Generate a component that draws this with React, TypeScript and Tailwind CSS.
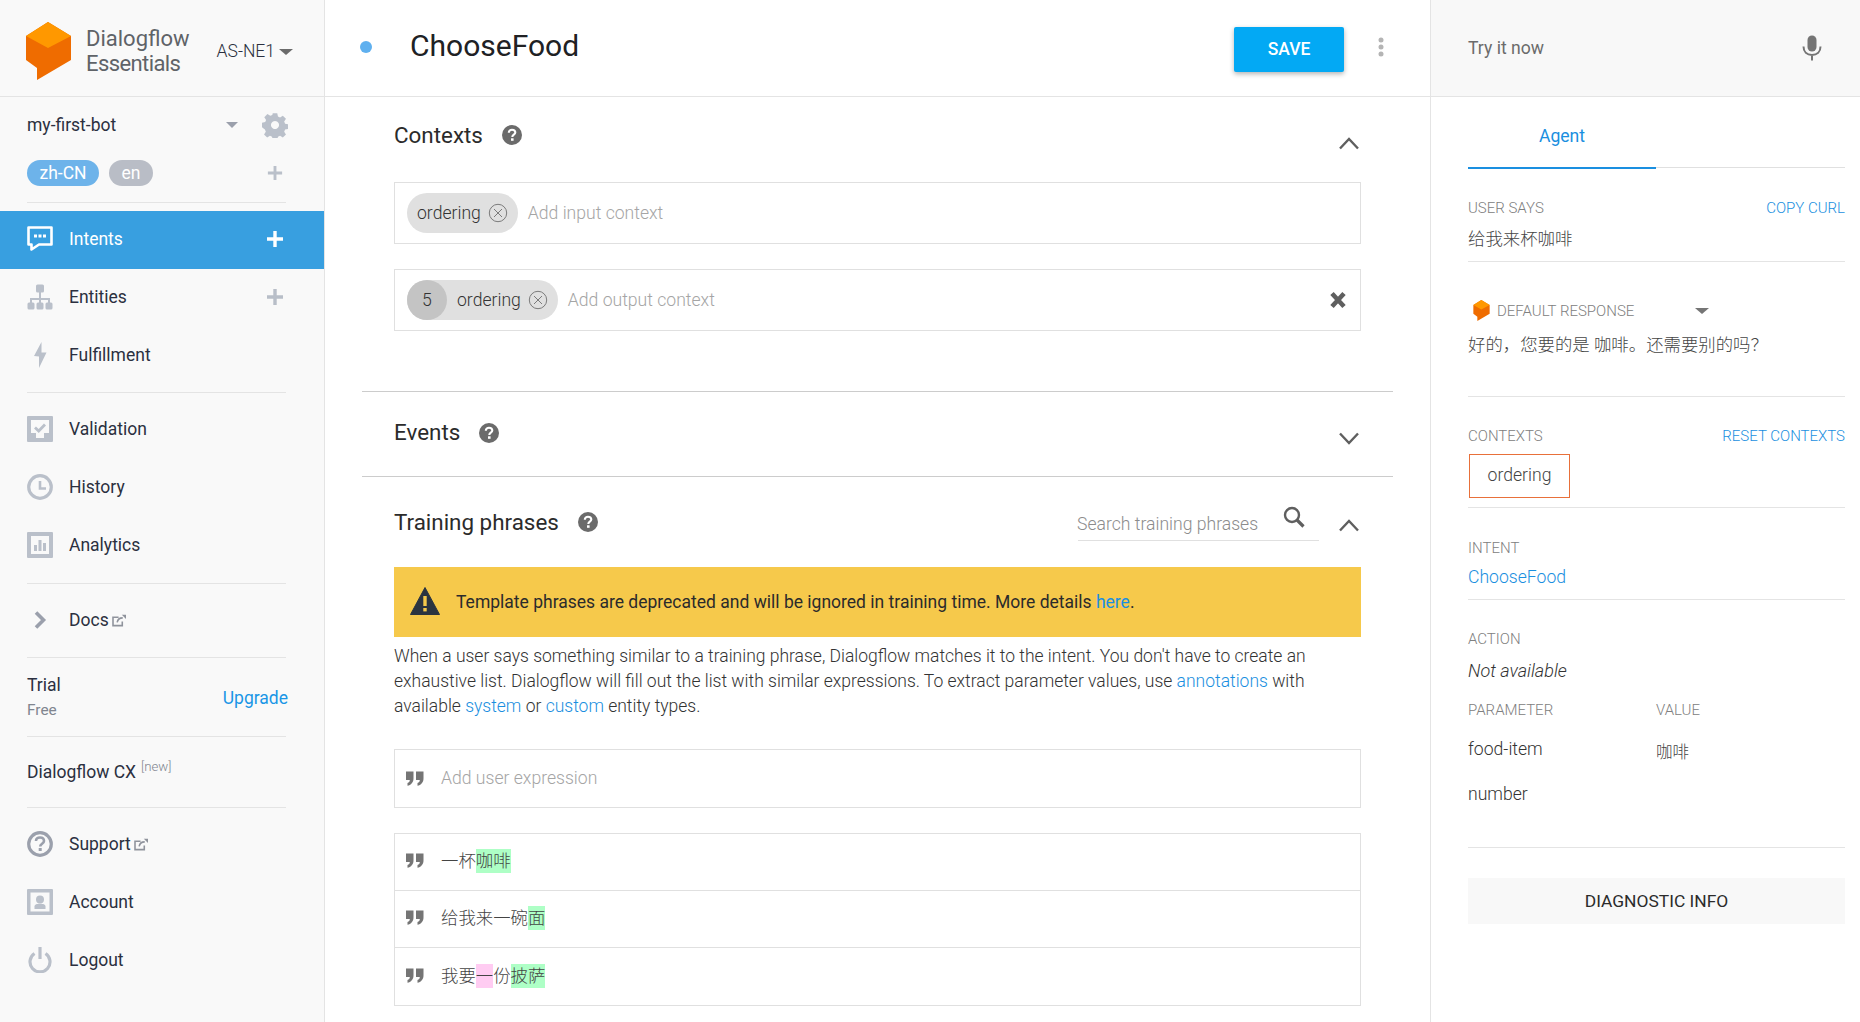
import React from "react";

const Logo = ({ className }: { className?: string }) => (
  <svg viewBox="0 0 45 58" className={className}>
    <path d="M22 0 L45 14 L45 38 L11 58 L11 46 L0 38 L0 14 Z" fill="#ef6c00" />
    <path d="M22 0 L45 14 L22 26 L0 14 Z" fill="#ff9800" />
  </svg>
);

const Divider = ({ className = "" }: { className?: string }) => <div className={`h-px bg-[#e4e4e4] ${className}`} />;

const Plus = ({ white }: { white?: boolean }) => (
  <svg viewBox="0 0 18 18" className="w-[18px] h-[18px]">
    <path d="M9 1v16M1 9h16" stroke={white ? "#fff" : "#b8bec8"} strokeWidth="3.4" fill="none" />
  </svg>
);

const ExtLink = () => (
  <svg viewBox="0 0 16 14" className="w-[15px] h-[13px] ml-[3px] inline-block">
    <path d="M11 8v4.500H1V3.500H7" stroke="#8f939c" strokeWidth="1.700" fill="none" />
    <path d="M5.500 9 C6 5.500 9 4.200 11.500 4.200" stroke="#8f939c" strokeWidth="1.700" fill="none" />
    <path d="M10.500 0.800 L15 0.800 L15 5.300 Z" fill="#8f939c" />
  </svg>
);

const ic = "w-[26px] h-[26px] shrink-0";
const G = "#bac0ca";

const IconIntents = () => (
  <svg viewBox="0 0 26 26" className={ic}>
    <path d="M1.500 1.500H24.500V18.500H12L4.500 23.500V18.500H1.500Z" fill="none" stroke="#fff" strokeWidth="2.600" strokeLinejoin="round" />
    <rect x="7" y="8.500" width="3" height="3" fill="#fff" />
    <rect x="11.500" y="8.500" width="3" height="3" fill="#fff" />
    <rect x="16" y="8.500" width="3" height="3" fill="#fff" />
  </svg>
);
const IconEntities = () => (
  <svg viewBox="0 0 26 26" className={ic}>
    <path d="M13 8V14M4 20V15H22V20M13 15V20" stroke={G} strokeWidth="2" fill="none" />
    <rect x="9" y="0.500" width="8" height="8" rx="1.500" fill={G} />
    <rect x="0.500" y="18.500" width="7" height="7" rx="1.500" fill={G} />
    <rect x="9.500" y="18.500" width="7" height="7" rx="1.500" fill={G} />
    <rect x="18.500" y="18.500" width="7" height="7" rx="1.500" fill={G} />
  </svg>
);
const IconBolt = () => (
  <svg viewBox="0 0 26 26" className={ic}>
    <path d="M14.500 0 L7 14 L12 14.500 L12 26 L19.500 10.500 L14.500 10.500Z" fill={G} />
  </svg>
);
const IconValidation = () => (
  <svg viewBox="0 0 26 26" className={ic}>
    <path fillRule="evenodd" d="M1 0H25a1 1 0 0 1 1 1V25a1 1 0 0 1-1 1H1a1 1 0 0 1-1-1V1a1 1 0 0 1 1-1ZM4 4V17H9V22H17V17H22V4Z" fill={G} />
    <path d="M8 11.500L11.700 15L18 8.500" stroke={G} strokeWidth="2.800" fill="none" />
  </svg>
);
const IconClock = () => (
  <svg viewBox="0 0 26 26" className={ic}>
    <circle cx="13" cy="13" r="11.300" fill="none" stroke={G} strokeWidth="3.200" />
    <path d="M13 7V14.500H19" stroke={G} strokeWidth="2.600" fill="none" />
  </svg>
);
const IconAnalytics = () => (
  <svg viewBox="0 0 26 26" className={ic}>
    <path fillRule="evenodd" d="M1 0H25a1 1 0 0 1 1 1V25a1 1 0 0 1-1 1H1a1 1 0 0 1-1-1V1a1 1 0 0 1 1-1ZM4 4V22H22V4Z" fill={G} />
    <rect x="7" y="13" width="3" height="6" fill={G} />
    <rect x="11.500" y="8" width="3" height="11" fill={G} />
    <rect x="16" y="11" width="3" height="8" fill={G} />
  </svg>
);
const IconChevron = () => (
  <svg viewBox="0 0 26 26" className={ic}>
    <path d="M9 5.500L16.500 13L9 20.500" stroke="#9ba0ac" strokeWidth="3.600" fill="none" />
  </svg>
);
const IconHelp = () => (
  <svg viewBox="0 0 26 26" className={ic}>
    <circle cx="13" cy="13" r="11.300" fill="none" stroke="#9ba0ac" strokeWidth="3.200" />
    <path d="M9 10C9 7.500 10.800 6.500 13 6.500C15.500 6.500 17 8 17 10C17 12.800 13.200 12.800 13.200 15.500" stroke="#9ba0ac" strokeWidth="2.600" fill="none" />
    <rect x="11.700" y="17" width="3" height="3" fill="#9ba0ac" />
  </svg>
);
const IconAccount = () => (
  <svg viewBox="0 0 26 26" className={ic}>
    <path fillRule="evenodd" d="M1 0H25a1 1 0 0 1 1 1V25a1 1 0 0 1-1 1H1a1 1 0 0 1-1-1V1a1 1 0 0 1 1-1ZM3.500 3.500V22.500H22.500V3.500Z" fill={G} />
    <circle cx="13" cy="10.500" r="4" fill={G} />
    <path d="M7.500 20V17.500C7.500 15.500 10 14.800 13 14.800C16 14.800 18.500 15.500 18.500 17.500V20Z" fill={G} />
  </svg>
);
const IconPower = () => (
  <svg viewBox="0 0 26 26" className={ic}>
    <path d="M7.500 6.500A10 10 0 1 0 18.500 6.500" stroke={G} strokeWidth="3.200" fill="none" />
    <path d="M13 0V12" stroke={G} strokeWidth="3.200" />
  </svg>
);

const NavRow = ({ icon, label, ext, plus, active, up }: { icon: React.ReactNode; label: string; ext?: boolean; plus?: boolean; active?: boolean; up?: boolean }) => (
  <div className={`h-[58px] flex items-center pl-[27px] pr-[40px] ${up ? "pb-[2px]" : ""} ${active ? "bg-[#389fe0] text-white" : "text-[#2b3040]"}`}>
    {icon}
    <span className="ml-[16px] text-[17.500px] flex items-center">{label}{ext && <ExtLink />}</span>
    {plus && <span className="ml-auto"><Plus white={active} /></span>}
  </div>
);

const SideDivider = ({ className = "" }: { className?: string }) => <Divider className={`ml-[27px] w-[259px] ${className}`} />;

const Sidebar = () => (
  <aside className="w-[325px] shrink-0 h-full bg-[#f9f9f9] border-r border-[#e4e4e4] overflow-hidden">
    <div className="h-[97px] border-b border-[#e4e4e4] flex items-center pl-[26px]">
      <Logo className="w-[45px] h-[58px] mt-[6px]" />
      <div className="ml-[15px] text-[22px] leading-[25px] text-[#5f6368] mt-[5px]">Dialogflow<br /><span className="tracking-[-0.6px]">Essentials</span></div>
      <div className="ml-[27px] text-[17.500px] font-light text-[#2b3040] flex items-center mt-[7px]">AS-NE1
        <span className="ml-[4px] w-0 h-0 border-x-[7px] border-x-transparent border-t-[6px] border-t-[#6b6b6b]" />
      </div>
    </div>
    <div className="mt-[12px] h-[32px] flex items-center pl-[27px] text-[17.500px] text-[#2b3040]">
      my-first-bot
      <span className="ml-[110px] w-0 h-0 border-x-[6px] border-x-transparent border-t-[6px] border-t-[#9ba0ac]" />
      <svg viewBox="0 0 26 26" className="w-[26px] h-[26px] ml-[24px]">
        <path fillRule="evenodd" fill={G} d="M10.500 0h5l.8 3.600 2.300 1 3.100-2 3.500 3.500-2 3.100 1 2.300 3.600.8v5l-3.600.8-1 2.300 2 3.100-3.500 3.500-3.100-2-2.300 1-.8 3.600h-5l-.8-3.600-2.300-1-3.100 2-3.500-3.500 2-3.100-1-2.300L-1.500 15.500v-5l3.600-.8 1-2.300-2-3.100 3.500-3.500 3.100 2 2.300-1ZM13 8.500a4.500 4.500 0 1 0 .001 0Z" transform="translate(1.300 1.300) scale(.9)" />
      </svg>
    </div>
    <div className="mt-[19px] h-[26px] flex items-center pl-[27px] pr-[41px] text-[17.500px] text-white">
      <span className="h-[26px] w-[72px] rounded-full bg-[#6db3ea] flex items-center justify-center">zh-CN</span>
      <span className="ml-[10px] h-[26px] w-[44px] rounded-full bg-[#b9bdc6] flex items-center justify-center">en</span>
      <span className="ml-auto"><svg viewBox="0 0 18 18" className="w-[16px] h-[16px]"><path d="M9 1v16M1 9h16" stroke={G} strokeWidth="3.200" /></svg></span>
    </div>
    <SideDivider className="mt-[16px]" />
    <div className="mt-[8px]">
      <NavRow up active icon={<IconIntents />} label="Intents" plus />
      <NavRow up icon={<IconEntities />} label="Entities" plus />
      <NavRow up icon={<IconBolt />} label="Fulfillment" />
    </div>
    <SideDivider className="mt-[7px]" />
    <div className="mt-[7px]">
      <NavRow icon={<IconValidation />} label="Validation" />
      <NavRow icon={<IconClock />} label="History" />
      <NavRow icon={<IconAnalytics />} label="Analytics" />
    </div>
    <SideDivider className="mt-[9px]" />
    <div className="mt-[7px]"><NavRow icon={<IconChevron />} label="Docs" ext /></div>
    <SideDivider className="mt-[8px]" />
    <div className="mt-[15px] pl-[27px] pr-[36px] flex items-center justify-between">
      <div>
        <div className="text-[17.500px] leading-[24px] text-[#2b3040]">Trial</div>
        <div className="mt-px text-[15.400px] leading-[24px] text-[#80858f]">Free</div>
      </div>
      <div className="text-[17.500px] text-[#1a96e6] mt-[1px]">Upgrade</div>
    </div>
    <SideDivider className="mt-[14px]" />
    <div className="mt-[19px] h-[32px] pl-[27px] flex items-center text-[17.500px] text-[#2b3040]">
      Dialogflow CX<span className="ml-[5px] -mt-[10px] text-[13.200px] font-light text-[#80858f]">[new]</span>
    </div>
    <SideDivider className="mt-[19px]" />
    <div className="mt-[7px]">
      <NavRow icon={<IconHelp />} label="Support" ext />
      <NavRow icon={<IconAccount />} label="Account" />
      <NavRow icon={<IconPower />} label="Logout" />
    </div>
  </aside>
);

const Help = ({ className = "" }: { className?: string }) => (
  <svg viewBox="0 0 20 20" className={`w-[20px] h-[20px] ${className}`}>
    <circle cx="10" cy="10" r="10" fill="#6b6b6b" />
    <path d="M6.800 7.800C6.800 5.800 8.300 4.700 10 4.700C12 4.700 13.300 5.900 13.300 7.500C13.300 9.700 10.300 9.700 10.300 12" stroke="#fff" strokeWidth="2.100" fill="none" />
    <rect x="9" y="13.300" width="2.600" height="2.500" fill="#fff" />
  </svg>
);

const Chev = ({ up, className = "" }: { up?: boolean; className?: string }) => (
  <svg viewBox="0 0 22 14" className={`w-[22px] h-[14px] mr-[1px] ${className}`}>
    <path d={up ? "M2 12.500L11 3L20 12.500" : "M2 1.500L11 11L20 1.500"} stroke="#5f5f5f" strokeWidth="2.400" fill="none" />
  </svg>
);

const CircleX = () => (
  <svg viewBox="0 0 20 20" className="w-[20px] h-[20px] shrink-0">
    <circle cx="10" cy="10" r="8.700" stroke="#7b7b7b" strokeWidth="1" fill="none" />
    <path d="M6 6L14 14M14 6L6 14" stroke="#7b7b7b" strokeWidth="1" />
  </svg>
);

const Quote = () => (
  <svg viewBox="0 0 18 15" className="w-[18px] h-[15px] shrink-0">
    <path d="M0 0.500H7.500V7.500C7.500 11.500 5 14 1.500 14.800V12C3 11.500 3.800 10.500 3.800 9H0ZM10 0.500H17.500V7.500C17.500 11.500 15 14 11.500 14.800V12C13 11.500 13.800 10.500 13.800 9H10Z" fill="#757575" />
  </svg>
);

const ct = "text-[17.600px] font-light";

const Phrase = ({ children, last }: { children: React.ReactNode; last?: boolean }) => (
  <div className={`h-[57px] flex items-center pl-[11px] ${last ? "" : "border-b border-[#e0e0e0]"}`}>
    <span className="-mt-[3px]"><Quote /></span>
    <span className="ml-[17px] text-[17.400px] font-light text-[#444] flex items-center -mt-[1px]">{children}</span>
  </div>
);

const Hl = ({ pink, children }: { pink?: boolean; children: React.ReactNode }) => (
  <span className={`h-[24px] flex items-center ${pink ? "bg-[#ffccf2]" : "bg-[#aeffc6]"}`}>{children}</span>
);

const Title = ({ children }: { children: React.ReactNode }) => (
  <h2 className="text-[22.400px] leading-[32px] font-normal text-[#2b2b2b]">{children}</h2>
);

const Main = () => (
  <main className="flex-1 min-w-0 h-full overflow-hidden bg-white">
    <div className="h-[97px] border-b border-[#e4e4e4] flex items-center pl-[36px]">
      <span className="w-[12px] h-[12px] rounded-full bg-[#5fb0ef] -mt-[3px] -ml-[1px]" />
      <h1 className="ml-[38px] text-[30px] font-normal text-[#202124] -mt-[5px]">ChooseFood</h1>
      <button className="ml-auto h-[45px] w-[110px] rounded-[2px] bg-[#03a9f4] text-white text-[17.500px] font-medium shadow-[0_2px_5px_rgba(0,0,0,0.3)] mt-[2px]">SAVE</button>
      <svg viewBox="0 0 6 20" className="w-[6px] h-[20px] ml-[34px] mr-[46px] -mt-[3px]">
        <circle cx="3" cy="3" r="2.500" fill="#b4b4b4" /><circle cx="3" cy="10" r="2.500" fill="#b4b4b4" /><circle cx="3" cy="17" r="2.500" fill="#b4b4b4" />
      </svg>
    </div>

    <div className="ml-[37px] mr-[37px]">
      <div className="px-[32px]">
        <div className="h-[85px] flex items-start pt-[22px]">
          <Title>Contexts</Title>
          <Help className="ml-[19px] mt-[6px]" />
          <Chev up className="ml-auto mt-[17px]" />
        </div>
        <div className="h-[62px] border border-[#e0e0e0] flex items-center pl-[12px]">
          <span className="h-[40px] pl-[10px] pr-[10px] rounded-full bg-[#e0e0e0] flex items-center text-[17.600px] font-light text-[#333]">ordering<span className="ml-[7px]"><CircleX /></span></span>
          <span className={`ml-[10px] ${ct} text-[#a5a5a5]`}>Add input context</span>
        </div>
        <div className="mt-[25px] h-[62px] border border-[#e0e0e0] flex items-center pl-[12px] pr-[13px]">
          <span className="h-[40px] pr-[10px] rounded-full bg-[#e0e0e0] flex items-center text-[17.600px] font-light text-[#333]">
            <span className="w-[40px] h-[40px] rounded-full bg-[#c4c4c4] flex items-center justify-center">5</span>
            <span className="ml-[10px]">ordering</span><span className="ml-[7px]"><CircleX /></span>
          </span>
          <span className={`ml-[10px] ${ct} text-[#a5a5a5]`}>Add output context</span>
          <svg viewBox="0 0 18 18" className="ml-auto w-[18px] h-[18px]">
            <path d="M3 2.500L15 15.500M15 2.500L3 15.500" stroke="#5f5f5f" strokeWidth="4.600" />
          </svg>
        </div>
      </div>

      <div className="mt-[60px] h-px bg-[#cccccc]" />
      <div className="h-[84px] px-[32px] flex items-start pt-[24px] ">
        <Title>Events</Title>
        <Help className="ml-[19px] mt-[7px]" />
        <Chev className="ml-auto mt-[16px]" />
      </div>
      <div className="h-px bg-[#cccccc]" />

      <div className="px-[32px]">
        <div className="h-[90px] flex items-start pt-[29px]">
          <Title>Training phrases</Title>
          <Help className="ml-[19px] mt-[6px]" />
          <div className="ml-auto w-[241px] h-[35px] border-b border-[#e0e0e0] flex items-start pt-[5px]">
            <span className={`${ct} text-[#8c8c8c] -ml-[1px]`}>Search training phrases</span>
            <svg viewBox="0 0 22 22" className="ml-auto mr-[14px] -mt-[5px] w-[22px] h-[22px]">
              <circle cx="9" cy="9" r="7" stroke="#5f5f5f" strokeWidth="2.400" fill="none" />
              <path d="M14 14L20.500 20.500" stroke="#5f5f5f" strokeWidth="3.200" />
            </svg>
          </div>
          <Chev up className="ml-[19px] mt-[12px]" />
        </div>

        <div className="h-[70px] bg-[#f6c94b] flex items-center pl-[16px] text-[#2b2b2b]">
          <svg viewBox="0 0 30 28" className="w-[30px] h-[28px] shrink-0 -mt-[2px]">
            <path d="M15 0.500L29.500 27.500H0.500Z" fill="#2b3440" stroke="#2b3440" strokeLinejoin="round" />
            <rect x="13.300" y="9" width="3.400" height="10" fill="#f6c94b" />
            <rect x="13.300" y="21" width="3.400" height="3.400" fill="#f6c94b" />
          </svg>
          <span className="ml-[16px] text-[17.500px] font-normal">Template phrases are deprecated and will be ignored in training time. More details <span className="text-[#1a8fe0]">here</span>.</span>
        </div>

        <p className="mt-[7px] text-[17.500px] leading-[25px] font-light text-[#333]">
          When a user says something similar to a training phrase, Dialogflow matches it to the intent. You don't have to create an<br />
          exhaustive list. Dialogflow will fill out the list with similar expressions. To extract parameter values, use <span className="text-[#1a8fe0]">annotations</span> with<br />
          available <span className="text-[#1a8fe0]">system</span> or <span className="text-[#1a8fe0]">custom</span> entity types.
        </p>

        <div className="mt-[30px] h-[59px] border border-[#e0e0e0] flex items-center pl-[11px]">
          <span className="-mt-[1px]"><Quote /></span>
          <span className={`ml-[17px] ${ct} text-[#a5a5a5]`}>Add user expression</span>
        </div>

        <div className="mt-[25px] border border-[#e0e0e0]">
          <Phrase>一杯<Hl>咖啡</Hl></Phrase>
          <Phrase>给我来一碗<Hl>面</Hl></Phrase>
          <Phrase last>我要<Hl pink>一</Hl>份<Hl>披萨</Hl></Phrase>
        </div>
      </div>
    </div>
  </main>
);

const Label = ({ children, className = "", link }: { children: React.ReactNode; className?: string; link?: boolean }) => (
  <div className={`h-[20px] leading-[20px] text-[15px] font-light ${link ? "text-[#1a8fe0]" : "text-[#808080]"} ${className}`}>{children}</div>
);

const Right = () => (
  <aside className="w-[430px] shrink-0 h-full bg-white border-l border-[#e4e4e4] overflow-hidden">
    <div className="h-[97px] bg-[#f8f8f8] border-b border-[#e4e4e4] flex items-center pl-[37px] pr-[38px]">
      <span className="text-[17.600px] text-[#6b6b6b]">Try it now</span>
      <svg viewBox="0 0 20 26" className="ml-auto w-[20px] h-[26px] -mt-[1px]">
        <rect x="5.500" y="0.500" width="9" height="16" rx="4.500" fill="#757575" />
        <path d="M1.500 11.500C1.500 17 5 20 10 20C15 20 18.500 17 18.500 11.500M10 20V25.500" stroke="#757575" strokeWidth="2" fill="none" />
      </svg>
    </div>
    <div className="pl-[37px] pr-[15px]">
      <div className="flex h-[71px]">
        <div className="w-[188px] border-b-2 border-[#1a8fe0] flex items-center justify-center text-[17.600px] text-[#1a8fe0] -mb-px pt-[8px]">Agent</div>
        <div className="flex-1 border-b border-[#e0e0e0]" />
      </div>
      <div className="mt-[30px] flex justify-between">
        <Label>USER SAYS</Label>
        <Label link>COPY CURL</Label>
      </div>
      <div className="mt-[8px] leading-[26px] text-[17.400px] font-light text-[#444]">给我来杯咖啡</div>
      <Divider className="mt-[9px]" />
      <div className="mt-[38px] flex items-center pl-[5px]">
        <Logo className="w-[17px] h-[21px] shrink-0" />
        <Label className="ml-[7px]">DEFAULT RESPONSE</Label>
        <span className="ml-[61px] w-0 h-0 border-x-[7px] border-x-transparent border-t-[6px] border-t-[#757575]" />
      </div>
      <div className="mt-[11px] leading-[26px] text-[17.400px] font-light text-[#444]">好的，您要的是 咖啡。还需要别的吗？</div>
      <Divider className="mt-[38px]" />
      <div className="mt-[29px] flex justify-between">
        <Label>CONTEXTS</Label>
        <Label link>RESET CONTEXTS</Label>
      </div>
      <div className="mt-[8px] ml-px w-[101px] h-[44px] border border-[#e8703a] flex items-center justify-center text-[17.600px] font-light text-[#444] pb-[2px]">ordering</div>
      <Divider className="mt-[9px]" />
      <Label className="mt-[30px]">INTENT</Label>
      <div className="mt-[6px] leading-[26px] text-[17.600px] font-light text-[#1a8fe0]">ChooseFood</div>
      <Divider className="mt-[9px]" />
      <Label className="mt-[29px]">ACTION</Label>
      <div className="mt-[9px] leading-[26px] text-[18px] font-light italic text-[#333]">Not available</div>
      <div className="mt-[16px] flex">
        <Label className="w-[188px]">PARAMETER</Label>
        <Label>VALUE</Label>
      </div>
      <div className="mt-[16px] flex">
        <div className="w-[188px] leading-[26px] text-[17.600px] font-light text-[#333]">food-item</div>
        <div className="leading-[26px] text-[16.500px] font-light text-[#444] mt-[4px]">咖啡</div>
      </div>
      <div className="mt-[15px] leading-[26px] text-[17.600px] font-light text-[#333]">number</div>
      <Divider className="mt-[40px]" />
      <div className="mt-[30px] h-[46px] bg-[#f8f8f8] flex items-center justify-center text-[17.400px] text-[#2b2b2b]">DIAGNOSTIC INFO</div>
    </div>
  </aside>
);

export default function App() {
  return (
    <div className="flex h-screen w-full overflow-hidden bg-white font-['Roboto','Noto_Sans_CJK_SC',sans-serif]">
      <Sidebar />
      <Main />
      <Right />
    </div>
  );
}
